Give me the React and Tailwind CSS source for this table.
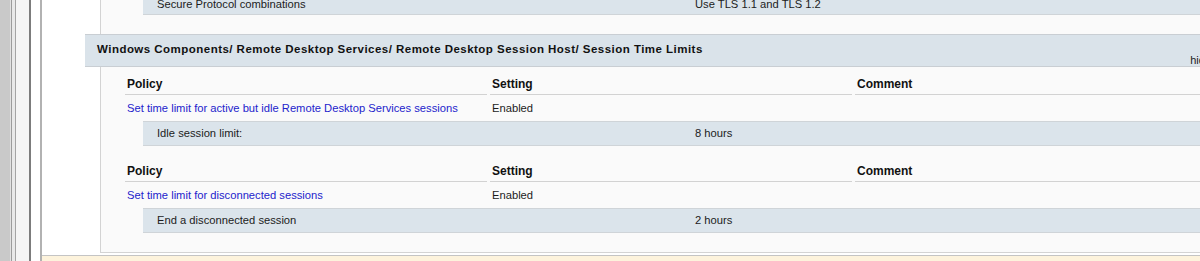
import React from 'react';

const font = { fontFamily: '"Liberation Sans", Arial, sans-serif' };

const policies = [
    {
        name: 'Set time limit for active but idle Remote Desktop Services sessions',
        setting: 'Enabled',
        detail: { label: 'Idle session limit:', value: '8 hours' },
    },
    {
        name: 'Set time limit for disconnected sessions',
        setting: 'Enabled',
        detail: { label: 'End a disconnected session', value: '2 hours' },
    },
];

// shaded sub-setting row under a policy
const DetailRow = ({ label, value }) => (
    <div className="ml-[42px] flex h-[25px] items-center border-y border-[#cfd4d8] bg-[#dbe4eb] text-[11.2px] text-[#1c1c1c]">
        <span className="w-[552px] shrink-0 pl-[14px]">{label}</span>
        <span>{value}</span>
    </div>
);

const PolicyBlock = ({ policy, top }) => (
    <div>
        <div className={`ml-[24px] flex items-end ${top} pb-[1px] text-[12px] font-bold text-[#111]`}>
            <span className="w-[365px] shrink-0 pl-[2px]">Policy</span>
            <span className="w-[365px] shrink-0 pl-[2px]">Setting</span>
            <span className="pl-[2px]">Comment</span>
        </div>
        <div className="ml-[24px] flex gap-[3px]">
            <div className="h-px w-[362px] bg-[#d2d2d2]" />
            <div className="h-px w-[362px] bg-[#d2d2d2]" />
            <div className="h-px flex-1 bg-[#d2d2d2]" />
        </div>
        <div className="ml-[24px] flex h-[26px] items-center text-[11.2px]">
            <span className="w-[365px] shrink-0 pl-[2px] text-[#2323cc]">{policy.name}</span>
            <span className="pl-[2px] text-[#1c1c1c]">{policy.setting}</span>
        </div>
        <DetailRow {...policy.detail} />
    </div>
);

export default function App() {
    return (
        <div className="flex h-[261px] w-[1200px] overflow-hidden bg-white" style={font}>
            {/* window chrome on the left */}
            <div className="flex h-full shrink-0">
                <div className="w-[10px] bg-[#c9c9c9]" />
                <div className="w-[1px] bg-[#e2e2e2]" />
                <div className="w-[1px] bg-[#9c9c9c]" />
                <div className="w-[3px] bg-[#e9e9e9]" />
                <div className="w-[1px] bg-[#a4a4a4]" />
                <div className="w-[13px] bg-[#f5f5f5]" />
                <div className="w-[2px] bg-[#7c7c7c]" />
                <div className="w-[9px] bg-white" />
                <div className="w-[2px] bg-[#b2b2b2]" />
            </div>

            <div className="flex min-w-0 flex-1 flex-col">
                <div className="h-[255px] shrink-0 pl-[58px]">
                    <div className="flex w-[1200px] flex-col border-b border-l border-[#d3d3d3] bg-[#fafafa] pb-[19px]">
                        {/* tail of the previous section */}
                        <div className="-mt-[5px] ml-[42px] flex h-[20px] items-center border-b border-[#cfd4d8] bg-[#dbe4eb] text-[11.2px] text-[#1c1c1c]">
                            <span className="w-[552px] shrink-0 pl-[14px]">Secure Protocol combinations</span>
                            <span>Use TLS 1.1 and TLS 1.2</span>
                        </div>

                        <div className="mt-[19px] -ml-[16px] h-[33px] w-[1140px] border-y border-[#c9ced3] bg-[#dae3ea] pl-[12px] pr-[14px]">
                            <div className="pt-[6px] text-[11.5px] font-bold tracking-[0.47px] text-[#111]">
                                Windows Components/ Remote Desktop Services/ Remote Desktop Session Host/ Session Time Limits
                            </div>
                            <div className="-mt-[6px] text-right text-[11px] text-[#1c1c1c]">hide</div>
                        </div>

                        <PolicyBlock policy={policies[0]} top="h-[27px]" />
                        <PolicyBlock policy={policies[1]} top="h-[35px]" />
                    </div>
                </div>
                <div className="flex-1 border-t border-[#c4c4c4] bg-[#fdf3dc]" />
            </div>
        </div>
    );
}
